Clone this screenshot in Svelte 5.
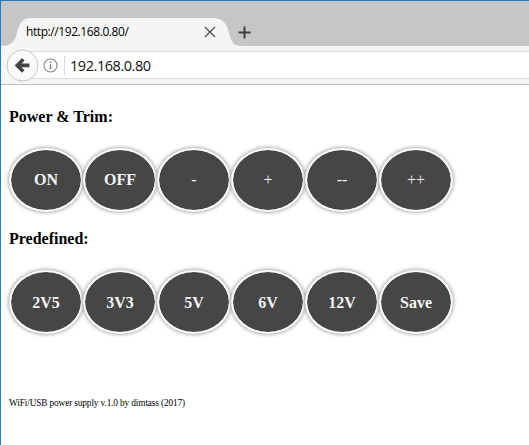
<script>
  const groups = [
    { title: 'Power & Trim:', buttons: ['ON', 'OFF', '-', '+', '--', '++'] },
    { title: 'Predefined:', buttons: ['2V5', '3V3', '5V', '6V', '12V', 'Save'] }
  ];
</script>

<div class="window">
  <header>
    <div class="tabs">
      <svg class="shape" width="242" height="28" viewBox="0 0 242 28">
        <path d="M0 28C8 28 12.5 24 14.5 16.5C17 6 19.5 0 30 0H210C221 0 224.5 5 227 15C229 23.5 231.5 28 240 28Z" fill="#f5f5f5" />
      </svg>
      <div class="tab">
        <span class="title">http://192.168.0.80/</span>
        <svg class="close" width="12" height="12" viewBox="0 0 12 12"><path d="M1 1L11 11M11 1L1 11" stroke="#4d4d4d" stroke-width="1.2" /></svg>
      </div>
      <svg class="plus" width="13" height="13" viewBox="0 0 13 13"><path d="M6.5 .5V12.5M.5 6.5H12.5" stroke="#404040" stroke-width="2" /></svg>
    </div>
    <div class="toolbar">
      <div class="field">
        <svg class="info" width="15" height="15" viewBox="0 0 15 15">
          <circle cx="7.5" cy="7.5" r="6.5" fill="none" stroke="#858585" stroke-width="1.1" />
          <path d="M7.5 6.4V11.2M7.5 3.6V5.1" stroke="#777" stroke-width="1.4" />
        </svg>
        <span class="sep"></span>
        <span class="url">192.168.0.80</span>
      </div>
      <svg class="back" width="33" height="33" viewBox="0 0 33 33">
        <circle cx="16.5" cy="16.5" r="15.5" fill="#fafafa" stroke="#c5c5c5" />
        <path d="M17.3 10.3L11.2 16.4L17.3 22.5M11.5 16.4H23.4" fill="none" stroke="#454545" stroke-width="3.6" />
      </svg>
    </div>
  </header>
  <main>
    {#each groups as group}
      <h2>{group.title}</h2>
      <div class="row">
        {#each group.buttons as label}
          <button class:sign={!/\w/.test(label)}>{label}</button>
        {/each}
      </div>
    {/each}
    <footer>WiFi/USB power supply v.1.0 by dimtass (2017)</footer>
  </main>
</div>

<style>
  .window {
    box-sizing: border-box;
    width: 529px;
    height: 445px;
    overflow: hidden;
    background: #fff;
    border-top: 1px solid #3078b5;
    border-left: 1px solid #3078b5;
    font-family: "Liberation Serif", serif;
    color: #000;
  }
  .tabs {
    position: relative;
    box-sizing: border-box;
    height: 45px;
    padding-top: 17px;
    display: flex;
    background: #c6c6c6;
  }
  .shape { position: absolute; left: 1px; top: 17px; }
  .tab {
    position: relative;
    box-sizing: border-box;
    width: 237px;
    height: 28px;
    padding: 0 22px 0 25px;
    display: flex;
    align-items: center;
    justify-content: space-between;
    font: 12px/28px "Open Sans", sans-serif;
  }
  .title { letter-spacing: -0.42px; }
  .close { display: block; }
  .plus { display: block; margin-top: 8px; }
  .toolbar {
    position: relative;
    box-sizing: border-box;
    height: 39px;
    padding: 5px 0;
    background: #f5f5f5;
    border-bottom: 1px solid #bdbdbd;
  }
  .back { position: absolute; left: 5px; top: 3px; }
  .field {
    box-sizing: border-box;
    height: 28px;
    margin-left: 21px;
    padding-left: 21px;
    display: flex;
    align-items: center;
    background: #fff;
    border-top: 1px solid #dcdcdf;
    border-bottom: 1px solid #dcdcdf;
  }
  .sep { width: 1px; height: 19px; margin: 0 5px 0 6px; background: #d9d9d9; }
  .url {
    padding-top: 2px;
    font: 14.5px/24px "Open Sans", sans-serif;
    letter-spacing: -0.45px;
    color: #111;
  }
  main { padding: 0 8px; }
  h2 {
    margin: 0;
    padding-top: 22px;
    height: 41px;
    font-size: 16px;
    line-height: 20px;
    font-weight: bold;
  }
  .row { display: flex; height: 59px; }
  button {
    box-sizing: border-box;
    flex: none;
    width: 74px;
    height: 64px;
    padding: 0;
    border: 2px solid #fafafa;
    border-radius: 50%;
    background: #464646;
    background-clip: padding-box;
    box-shadow: 0 0 4px #808080;
    color: #f5f5f5;
    font: bold 16px/20px "Liberation Serif", serif;
  }
  .row:nth-of-type(2) button { padding-top: 2px; }
  .sign { font-weight: normal; }
  footer {
    padding-top: 68px;
    font-size: 9.3px;
    line-height: 12px;
    letter-spacing: -0.13px;
  }
</style>
